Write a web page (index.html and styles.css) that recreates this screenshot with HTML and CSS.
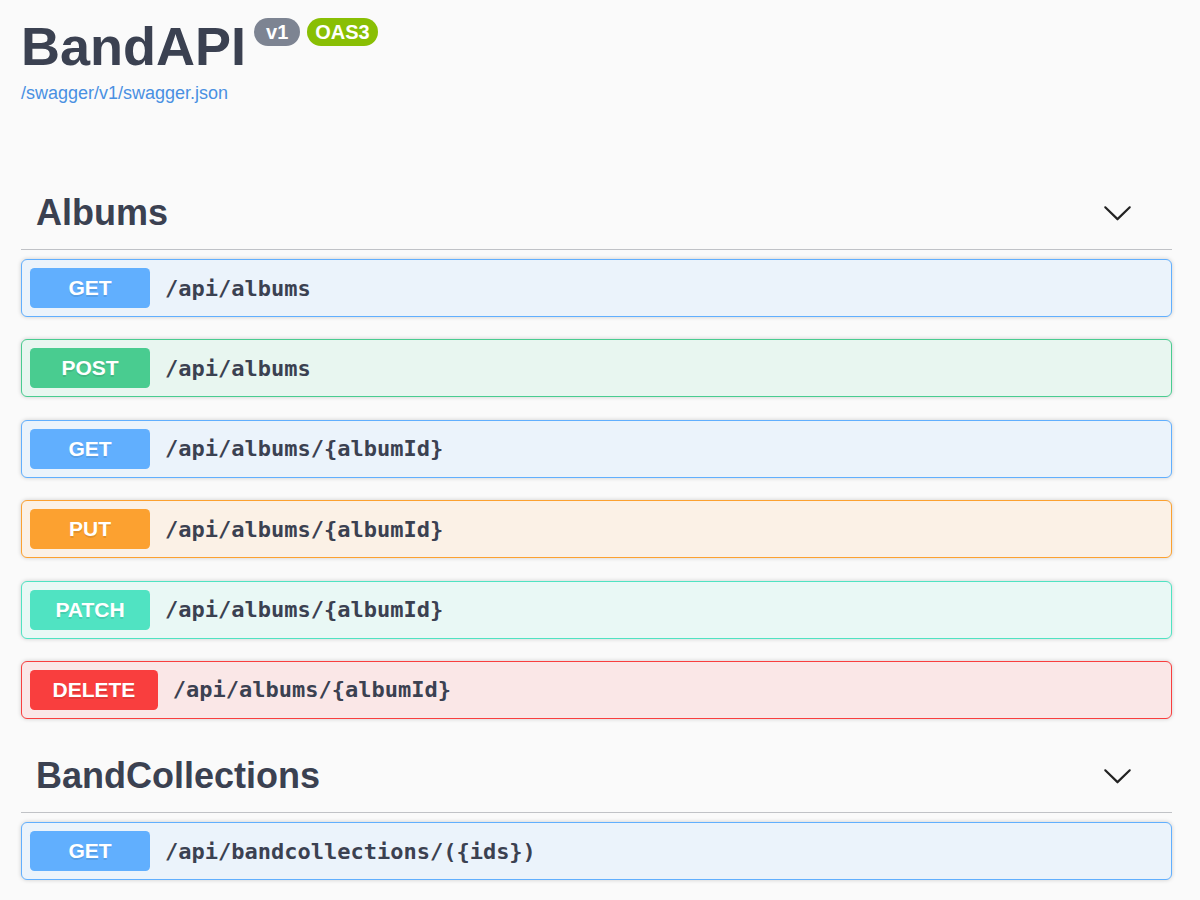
FILE: index.html
```html
<!DOCTYPE html>
<html lang="en">
<head>
<meta charset="utf-8">
<title>BandAPI</title>
<link rel="stylesheet" href="styles.css">
</head>
<body>
<div class="wrapper">
  <div class="info">
    <h2 class="title">
      <span class="title-text">BandAPI</span>
      <small class="badge badge-version">v1</small>
      <small class="badge badge-oas">OAS3</small>
    </h2>
    <a class="spec-link" href="#">/swagger/v1/swagger.json</a>
  </div>

  <section class="tag-section">
    <h3 class="tag">
      <span>Albums</span>
      <svg class="arrow" viewBox="0 0 20 20" width="30" height="30" aria-hidden="true"><path d="M17.418 6.109c.272-.268.709-.268.979 0s.271.701 0 .969l-7.908 7.83c-.27.268-.707.268-.979 0l-7.908-7.830c-.27-.268-.27-.701 0-.969.271-.268.709-.268.979 0L10 13.25l7.418-7.141z"/></svg>
    </h3>
    <div class="opblock get"><span class="method">GET</span><span class="path">/api/albums</span></div>
    <div class="opblock post"><span class="method">POST</span><span class="path">/api/albums</span></div>
    <div class="opblock get"><span class="method">GET</span><span class="path">/api/albums/{albumId}</span></div>
    <div class="opblock put"><span class="method">PUT</span><span class="path">/api/albums/{albumId}</span></div>
    <div class="opblock patch"><span class="method">PATCH</span><span class="path">/api/albums/{albumId}</span></div>
    <div class="opblock delete"><span class="method">DELETE</span><span class="path">/api/albums/{albumId}</span></div>
  </section>

  <section class="tag-section">
    <h3 class="tag">
      <span>BandCollections</span>
      <svg class="arrow" viewBox="0 0 20 20" width="30" height="30" aria-hidden="true"><path d="M17.418 6.109c.272-.268.709-.268.979 0s.271.701 0 .969l-7.908 7.83c-.27.268-.707.268-.979 0l-7.908-7.830c-.27-.268-.27-.701 0-.969.271-.268.709-.268.979 0L10 13.25l7.418-7.141z"/></svg>
    </h3>
    <div class="opblock get"><span class="method">GET</span><span class="path">/api/bandcollections/({ids})</span></div>
  </section>
</div>
</body>
</html>
```

FILE: styles.css
```css
html, body {
  margin: 0;
  padding: 0;
  background: #fafafa;
}

body {
  font-family: "Liberation Sans", Arial, sans-serif;
  color: #3b4151;
  overflow: hidden;
}

.wrapper {
  padding: 0 28px 0 21px;
}

.info {
  margin: 15px 0 74px;
}

.title {
  display: flex;
  align-items: flex-start;
  margin: 0;
  font-size: 54px;
  font-weight: 700;
  line-height: 62px;
  color: #3b4151;
}

.badge {
  margin-top: 3px;
  height: 28px;
  line-height: 28px;
  font-size: 20px;
  font-weight: 700;
  color: #fff;
  border-radius: 57px;
}

.badge-version {
  margin-left: 8px;
  padding: 0 12px;
  background: #7d8492;
}

.badge-oas {
  margin-left: 7px;
  padding: 0 8px;
  background: #89bf04;
}

.spec-link {
  display: block;
  margin-top: 6px;
  font-size: 18px;
  line-height: 21px;
  color: #4990e2;
  text-decoration: none;
}

.tag-section {
  margin: 0;
}

.tag {
  display: flex;
  align-items: center;
  justify-content: space-between;
  margin: 0 0 9px;
  padding: 14px 30px 16px 15px;
  font-size: 36px;
  font-weight: 700;
  line-height: 41px;
  color: #3b4151;
  border-bottom: 1px solid rgba(59, 65, 81, 0.3);
}

.arrow {
  width: 31px;
  height: 31px;
  margin-right: 9px;
  fill: #222;
}

.opblock {
  display: flex;
  align-items: center;
  height: 40px;
  padding: 8px;
  margin-bottom: 22.4px;
  border: 1px solid;
  border-radius: 6px;
  box-shadow: 0 0 4.5px rgba(0, 0, 0, 0.19);
}

.method {
  box-sizing: border-box;
  min-width: 120px;
  padding: 9px 22.5px;
  font-size: 21px;
  font-weight: 700;
  line-height: 22px;
  text-align: center;
  color: #fff;
  border-radius: 4.5px;
  text-shadow: 0 1.5px 0 rgba(0, 0, 0, 0.1);
}

.path {
  padding: 0 15px;
  font-family: "DejaVu Sans Mono", monospace;
  font-size: 22px;
  font-weight: 700;
  color: #3b4151;
}

.get { background: #ebf3fb; border-color: #61affe; }
.get .method { background: #61affe; }

.post { background: #e8f6f0; border-color: #49cc90; }
.post .method { background: #49cc90; }

.put { background: #fbf1e6; border-color: #fca130; }
.put .method { background: #fca130; }

.patch { background: #e9f8f5; border-color: #50e3c2; }
.patch .method { background: #50e3c2; }

.delete { background: #fae7e7; border-color: #f93e3e; }
.delete .method { background: #f93e3e; }
```
